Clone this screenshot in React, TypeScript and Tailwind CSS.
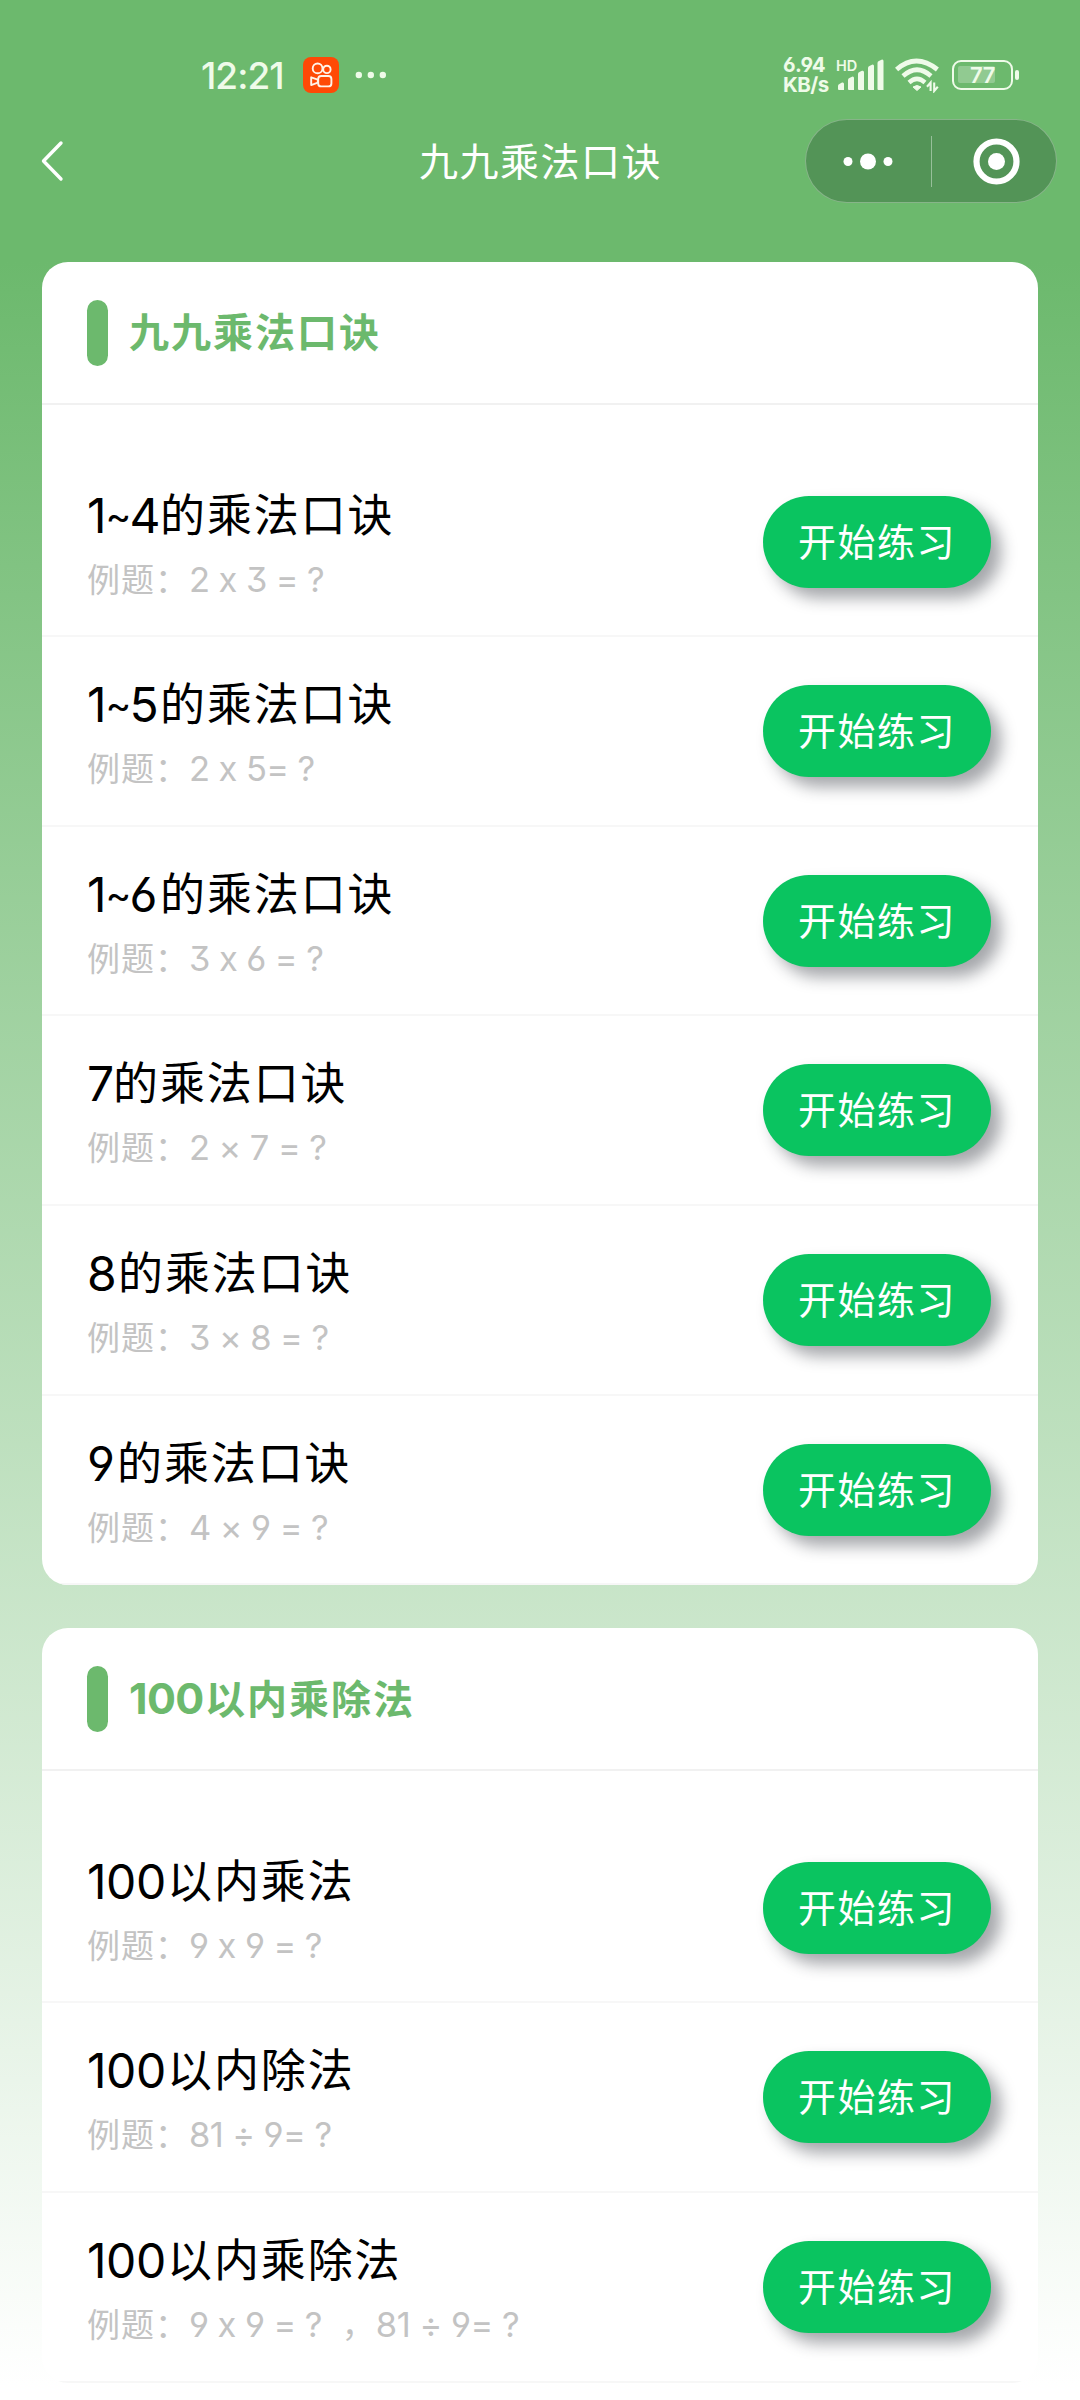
import type { ReactNode } from 'react'

interface Practice {
  // latin prefix and chinese remainder are set in different sizes
  prefix: string
  prefixWidth: string
  name: string
  example: string
  // second example, shown after a full-width comma
  extra?: string
}

interface Section {
  title: ReactNode
  items: Practice[]
}

const sections: Section[] = [
  {
    title: '九九乘法口诀',
    items: [
      { prefix: '1~4', prefixWidth: 'w-[73px] tracking-[-1px]', name: '的乘法口诀', example: '2 x 3 = ?' },
      { prefix: '1~5', prefixWidth: 'w-[73px] tracking-[-1px]', name: '的乘法口诀', example: '2 x 5= ?' },
      { prefix: '1~6', prefixWidth: 'w-[73px] tracking-[-1px]', name: '的乘法口诀', example: '3 x 6 = ?' },
      { prefix: '7', prefixWidth: 'w-[26px]', name: '的乘法口诀', example: '2 × 7 = ?' },
      { prefix: '8', prefixWidth: 'w-[31px]', name: '的乘法口诀', example: '3 × 8 = ?' },
      { prefix: '9', prefixWidth: 'w-[30px]', name: '的乘法口诀', example: '4 × 9 = ?' },
    ],
  },
  {
    title: (
      <>
        <span className="inline-block w-[76px] text-[43px] leading-none tracking-[-0.6px]">100</span>
        以内乘除法
      </>
    ),
    items: [
      { prefix: '100', prefixWidth: 'w-[80px] tracking-[-0.4px]', name: '以内乘法', example: '9 x 9 = ?' },
      { prefix: '100', prefixWidth: 'w-[80px] tracking-[-0.4px]', name: '以内除法', example: '81 ÷ 9= ?' },
      { prefix: '100', prefixWidth: 'w-[80px] tracking-[-0.4px]', name: '以内乘除法', example: '9 x 9 = ?', extra: '81 ÷ 9= ?' },
    ],
  },
]

function StatusBar() {
  return (
    <div className="flex h-[110px] items-center justify-between pt-[40px] pr-[61px] pl-[201px] text-[#effbe9]">
      <div className="flex items-center">
        <span className="w-[102px] text-[37px] leading-none font-medium whitespace-nowrap tracking-[-1px]">12:21</span>
        <svg width="36" height="36" viewBox="0 0 36 36" fill="none">
          <rect width="36" height="36" rx="8" fill="#ff4906" />
          <g stroke="#fff3ea" strokeWidth="1.9" strokeLinejoin="round">
            <circle cx="14.6" cy="11.4" r="4.9" />
            <circle cx="23.9" cy="12.4" r="3.7" />
            <rect x="15.2" y="19" width="13.2" height="10.4" rx="3" />
            <path d="M8.2 20.3v7.8l6.600-2.400v-3z" />
          </g>
        </svg>
        <svg className="ml-[15px]" width="34" height="8" viewBox="0 0 34 8" fill="currentColor">
          <circle cx="4.8" cy="4" r="3.2" />
          <circle cx="16.8" cy="4" r="3.2" />
          <circle cx="28.8" cy="4" r="3.2" />
        </svg>
      </div>
      <div className="flex items-center">
        <div className="w-[53px] text-[20.500px] leading-[20px] font-bold whitespace-nowrap tracking-[-0.5px]">
          <div>6.94</div>
          <div>KB/s</div>
        </div>
        <div className="flex h-[38px] w-[48px] items-start">
          <span className="w-0 pt-[3px] text-[14.500px] leading-none font-semibold whitespace-nowrap">HD</span>
          <svg className="mt-[3px] ml-[2px] shrink-0" width="46" height="32" viewBox="0 0 46 32" fill="currentColor">
            <path d="M0 27q0-1.500 1.400-2l2.600-1.400q2-.6 2 1.400V31H1q-1 0-1-1z" />
            <path d="M10 21q0-1.500 1.400-2l2.600-1.300q2-.6 2 1.400V31h-5q-1 0-1-1z" />
            <path d="M20 15q0-1.500 1.400-2l2.600-1.200q2-.6 2 1.400V31h-5q-1 0-1-1z" />
            <path d="M30 9q0-1.500 1.400-2l2.600-1.300q2-.6 2 1.400V31h-5q-1 0-1-1z" />
            <path d="M39.500 4q0-1.500 1.400-2l2.600-1.300q2-.6 2 1.400V31h-5q-1 0-1-1z" />
          </svg>
        </div>
        <svg className="ml-[11px]" width="46" height="36" viewBox="0 0 46 36" fill="none" stroke="currentColor">
          <path d="M1.600 12.500Q21 -4.500 42.400 12.500" strokeWidth="4.800" />
          <path d="M8 19Q22 6.500 36 19" strokeWidth="4.600" />
          <path d="M14 25.500Q22 18.300 30 25.500" strokeWidth="4.400" />
          <path d="M18 30q4-3 8 0l-4 3.500z" fill="currentColor" strokeWidth="1" />
          <path d="M35.600 34v-8.500l-3.600 4.200M39.200 25.500V34l3.600-4.200" strokeWidth="2.100" />
        </svg>
        <div className="ml-[11px] flex items-center">
          <div className="relative flex h-[30px] w-[61px] items-center justify-center rounded-[9px] border-[2.500px] border-current">
            <div className="absolute top-[4px] left-[4px] h-[17px] w-[37px] rounded-[2px] bg-white/25" />
            <span className="relative text-[22px] leading-none font-semibold tracking-[-0.5px]">77</span>
          </div>
          <div className="ml-[2px] h-[10px] w-[4px] rounded-full bg-current" />
        </div>
      </div>
    </div>
  )
}

function NavBar() {
  return (
    <div className="flex h-[102px] items-center pr-[23px] pl-[40px]">
      <svg width="26" height="44" viewBox="0 0 26 44" fill="none" stroke="white" strokeWidth="3.400" strokeLinecap="round" strokeLinejoin="round">
        <path d="M21 4L3.500 22L21 40" />
      </svg>
      <h1 className="ml-[353px] flex-1 text-[39px] leading-none font-normal tracking-[1.500px] text-white">
        九九乘法口诀
      </h1>
      <div className="flex h-[84px] w-[252px] items-center rounded-full border border-white/30 bg-[#539457]">
        <svg width="250" height="82" viewBox="0 0 250 82" fill="white">
          <circle cx="42" cy="41.500" r="4.500" />
          <circle cx="62" cy="41.500" r="8" />
          <circle cx="82" cy="41.500" r="4.500" />
          <rect x="125" y="16" width="1" height="51" fillOpacity="0.4" />
          <circle cx="190.500" cy="41.500" r="20" fill="none" stroke="white" strokeWidth="6.200" />
          <circle cx="190.500" cy="41.500" r="8.500" />
        </svg>
      </div>
    </div>
  )
}

function PracticeRow({ item, first }: { item: Practice; first: boolean }) {
  const [from, to] = item.prefix.split('~')

  return (
    <div
      className={`flex items-center justify-between border-b-2 border-[#f7f7f7] pr-[47px] pl-[45px] ${
        first ? 'h-[232px] pt-[43px]' : 'h-[189.7px]'
      }`}
    >
      <div className="pt-[12px]">
        <div className="flex h-[64px] text-[45px] leading-[64px] whitespace-nowrap text-black">
          <span className={`${item.prefixWidth} text-[48px]`}>
            {from}
            {to && <span className="inline-block w-[24px] align-[3px] text-[39px] leading-none">~</span>}
            {to}
          </span>
          <span className="tracking-[1.900px]">{item.name}</span>
        </div>
        <div className="flex text-[33px] leading-[64px] whitespace-pre text-[#c3c3c3]">
          <span className="tracking-[1px]">例题：</span>
          <span className="text-[34.500px] tracking-[-0.6px]">{item.example}</span>
          {item.extra && (
            <>
              <span className="w-[54px] pl-[20px]">，</span>
              <span className="text-[34.500px] tracking-[-0.5px]">{item.extra}</span>
            </>
          )}
        </div>
      </div>
      <button className="h-[92px] w-[228px] rounded-full bg-[#0ac460] text-[38px] leading-none tracking-[1.500px] text-white shadow-[10px_10px_16px_rgba(30,35,45,0.4)]">
        开始练习
      </button>
    </div>
  )
}

function SectionCard({ section }: { section: Section }) {
  return (
    <section className="overflow-hidden rounded-[26px] bg-white">
      <div className="flex h-[143px] items-center border-b-2 border-[#f1f1f1] pl-[45px]">
        <div className="h-[66px] w-[21px] rounded-full bg-[#6cb96d]" />
        <h2 className="ml-[21px] text-[40px] leading-none font-bold tracking-[2px] text-[#6cb96d]">
          {section.title}
        </h2>
      </div>
      {section.items.map((item, i) => (
        <PracticeRow key={item.prefix + item.name} item={item} first={i === 0} />
      ))}
    </section>
  )
}

export default function App() {
  return (
    <div className="h-[2400px] w-[1080px] overflow-hidden bg-[linear-gradient(#6cb96d_262px,#ffffff_2384px)] font-[Inter,'Noto_Sans_CJK_SC',sans-serif] [font-feature-settings:'calt'_0,'cv03'_1,'cv04'_1,'cv09'_1]">
      <StatusBar />
      <NavBar />
      <main className="mt-[50px] flex flex-col gap-[43px] px-[42px]">
        {sections.map((s, i) => (
          <SectionCard key={i} section={s} />
        ))}
      </main>
    </div>
  )
}
